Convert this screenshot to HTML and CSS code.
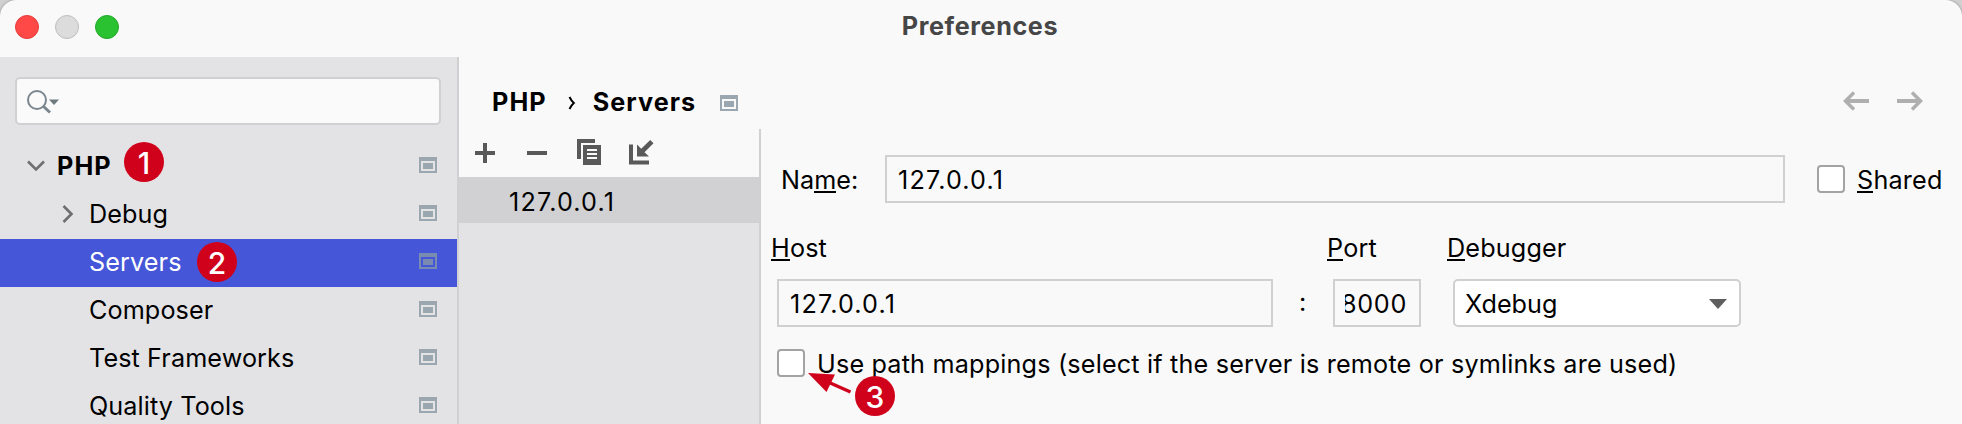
FILE: index.html
```html
<!DOCTYPE html>
<html lang="en">
<head>
<meta charset="utf-8">
<title>Preferences</title>
<link rel="stylesheet" href="styles.css">
</head>
<body>
<svg class="defs" aria-hidden="true">
  <symbol id="project" viewBox="0 0 18 16"><path fill="currentColor" fill-rule="evenodd" d="M0 0h18v16H0zM2 4v10h14V4zM4 6h10v6H4z"/></symbol>
</svg>
<div class="window">
  <header class="titlebar">
    <div class="lights"><i class="light red"></i><i class="light gray"></i><i class="light green"></i></div>
    <h1 class="title">Preferences</h1>
  </header>
  <div class="body">
    <aside class="sidebar">
      <div class="search">
        <svg width="34" height="26" viewBox="0 0 34 26"><g fill="none" stroke="#7b868e"><circle cx="11" cy="11" r="9" stroke-width="2"/><path d="M17 17l7 6.500" stroke-width="3"/></g><path fill="#6e7980" d="M23 10.500h10l-5 5.500z"/></svg>
      </div>
      <ul class="tree">
        <li class="row top"><svg class="chev" width="18" height="12" viewBox="0 0 18 12"><path d="M1 1.500l8 8 8-8"/></svg><span>PHP</span><svg class="mark"><use href="#project"/></svg></li>
        <li class="row"><svg class="chev side" width="12" height="18" viewBox="0 0 12 18"><path d="M1.500 1l8 8-8 8"/></svg><span>Debug</span><svg class="mark"><use href="#project"/></svg></li>
        <li class="row active"><span>Servers</span><svg class="mark"><use href="#project"/></svg></li>
        <li class="row"><span>Composer</span><svg class="mark"><use href="#project"/></svg></li>
        <li class="row"><span>Test Frameworks</span><svg class="mark"><use href="#project"/></svg></li>
        <li class="row"><span>Quality Tools</span><svg class="mark"><use href="#project"/></svg></li>
      </ul>
    </aside>
    <main class="main">
      <div class="crumbs">
        <b>PHP</b>
        <svg class="sep" width="8" height="14" viewBox="0 0 8 14"><path d="M1.500 1Q3.500 5 5.800 7 3.500 9 1.500 13" fill="none" stroke="#000" stroke-width="2"/></svg>
        <b class="current">Servers</b>
        <svg class="mark"><use href="#project"/></svg>
        <svg class="nav" width="80" height="20" viewBox="0 0 80 20"><g fill="none" stroke="#afafaf"><path stroke-width="4" d="M3 10h23M54 10h23"/><path stroke-width="3.500" d="M11 1.500L2.500 10l8.500 8.500M69 1.500l8.500 8.500-8.500 8.500"/></g></svg>
      </div>
      <div class="panes">
        <section class="list">
          <div class="tools">
            <svg width="20" height="20" viewBox="0 0 20 20"><path d="M8 0h4v8h8v4h-8v8H8v-8H0V8h8z"/></svg>
            <svg width="20" height="20" viewBox="0 0 20 20"><path d="M0 8h20v4H0z"/></svg>
            <svg class="copy" width="24" height="26" viewBox="0 0 24 26"><path fill-rule="evenodd" d="M0 0h18v4H4v16H0zM6 6h18v20H6zM10 10v2h10v-2zM10 14v2h10v-2zM10 18v2h10v-2z"/></svg>
            <svg class="import" width="25" height="25" viewBox="0 0 25 25"><path d="M0 4.500h4v16h16v4H0zM8 4.500l4.200 4.200L21.200 0 24.500 3.200 15.500 12.200 20 16.500H8z"/></svg>
          </div>
          <div class="item ip">127.0.0.1</div>
        </section>
        <section class="form">
          <div class="name-row">
            <label class="name-label">Na<u>m</u>e:</label>
            <div class="field name ip">127.0.0.1</div>
            <i class="check"></i>
            <label class="shared"><u>S</u>hared</label>
          </div>
          <div class="grid">
            <label><u>H</u>ost</label><label><u>P</u>ort</label><label><u>D</u>ebugger</label>
          </div>
          <div class="server-row">
            <div class="field host ip">127.0.0.1</div>
            <span class="colon">:</span>
            <div class="field port"><div class="clip">8000</div></div>
            <div class="select"><span>Xdebug</span><svg width="18" height="10" viewBox="0 0 18 10"><path fill="#5e5e5e" d="M0 0h18L9 10z"/></svg></div>
          </div>
          <div class="map-row"><i class="check"></i><label class="map-label">Use path mappings (select if the server is remote or symlinks are used)</label></div>
        </section>
      </div>
    </main>
  </div>
  <span class="badge one">1</span>
  <span class="badge two">2</span>
  <span class="badge three">3</span>
  <svg class="pointer" width="44" height="22" viewBox="0 0 44 22"><path d="M0 0L27 1.500 18.500 19z" fill="#d0021b"/><path d="M20 9l22.500 10" stroke="#d0021b" stroke-width="3.500"/></svg>
</div>
</body>
</html>
```
FILE: styles.css
```css
* { box-sizing: border-box; }
body { margin: 0; background: #cfcfcf; font: 25.2px/46px Inter, "Liberation Sans", sans-serif; color: #000; }
svg { display: block; flex: none; }
i { display: block; flex: none; }
.defs { position: absolute; width: 0; height: 0; }
.window { position: relative; width: 1962px; height: 424px; overflow: hidden; background: #f9f9f9; border-radius: 16px 16px 0 0; box-shadow: 0 0 2px #777; }
.titlebar { height: 57px; display: grid; grid-template-columns: 200px 1fr 200px; }
.lights { display: flex; gap: 16px; padding: 15px 0 0 15px; }
.light { width: 24px; height: 24px; border-radius: 50%; border: 1px solid; }
.red { background: #ff4947; border-color: #e33b3a; }
.gray { background: #dcdcdc; border-color: #bdbdbd; }
.green { background: #2bc232; border-color: #22a62a; }
.title { margin: 0; padding: 3px 2px 0 0; text-align: center; font-size: 25.2px; line-height: 46px; font-weight: 700; letter-spacing: .6px; color: #464646; }
.body { display: flex; height: 367px; }
.sidebar { width: 459px; flex: none; background: #e3e3e5; border-right: 2px solid #d0d0d2; padding-top: 20px; }
.search { width: 426px; height: 48px; margin-left: 15px; background: #fafafa; border: 2px solid #d0d0d2; border-radius: 5px; padding: 10px 0 0 9px; }
.tree { list-style: none; margin: 18px 0 0; padding: 0; }
.row { position: relative; height: 48px; display: flex; padding: 0 20px 0 89px; white-space: nowrap; letter-spacing: .1px; }
.row .mark { margin: 14px 0 0 auto; }
.mark { width: 18px; height: 16px; color: #9aa7b0; }
.top { padding-left: 27px; font-weight: 700; letter-spacing: 1.1px; }
.chev { fill: none; stroke: #6e6e6e; stroke-width: 2.6; margin: 17px 12px 0 0; }
.side { margin: 14px 15px 0 -27px; }
.active { background: #4556d8; color: #fff; }
.active .mark { color: #7a8bb0; }
.main { flex: 1; }
.crumbs { height: 72px; display: flex; padding: 22px 39px 0 33px; letter-spacing: 1.1px; }
.crumbs .sep { margin: 17px 17px 0 21px; }
.crumbs .mark { margin: 16px 0 0; }
.crumbs .current { width: 127px; letter-spacing: 1.05px; }
.crumbs .nav { margin: 12px 0 0 auto; }
.panes { display: flex; height: 295px; }
.list { width: 302px; background: #e3e3e5; border-right: 2px solid #d0d0d2; }
.tools { height: 48px; background: #f9f9f9; display: flex; padding: 14px 0 0 16px; gap: 32px; fill: #595959; }
.copy { margin: -4px 0 0 -2px; }
.import { margin: -3px 0 0 -4px; }
.ip { letter-spacing: 1.15px; }
.item { height: 46px; background: #d1d1d3; padding-left: 50px; line-height: 50px; }
.form { flex: 1; padding-top: 26px; }
.name-row { display: flex; height: 48px; padding-left: 20px; }
.field { border: 2px solid #d0d0d0; height: 48px; line-height: 46px; padding-left: 11px; flex: none; }
.name { width: 900px; }
.name-label { width: 104px; line-height: 50px; }
.check { width: 28px; height: 28px; border: 2px solid #a3a3a3; border-radius: 4px; background: #fff; }
.name-row .check { margin: 10px 12px 0 32px; }
.shared { line-height: 50px; letter-spacing: .2px; }
u { text-decoration: none; border-bottom: 2px solid #000; display: inline-block; line-height: 24px; height: 25px; }
.grid { display: grid; grid-template-columns: 556px 120px 1fr; padding: 22px 0 0 10px; height: 76px; letter-spacing: .15px; }
.server-row { display: flex; padding-left: 16px; }
.host { width: 496px; }
.colon { width: 60px; padding-left: 26px; }
.port { width: 88px; padding: 0 9px 0 10px; }
.clip { overflow: hidden; height: 44px; letter-spacing: .7px; text-indent: -4px; }
.select { width: 288px; height: 48px; margin-left: 32px; border: 2px solid #d0d0d0; border-radius: 5px; background: #fff; padding: 0 12px 0 10px; display: flex; justify-content: space-between; }
.select svg { margin-top: 18px; }
.map-row { display: flex; padding: 22px 0 0 16px; gap: 12px; white-space: nowrap; letter-spacing: .18px; }
.map-label { margin-top: -8px; }
.badge { position: absolute; width: 40px; height: 40px; border-radius: 50%; background: #d0021b; color: #fff; font-size: 30px; font-weight: 500; line-height: 42px; text-align: center; }
.one { left: 124px; top: 142px; }
.two { left: 197px; top: 242px; }
.three { left: 855px; top: 376px; }
.pointer { position: absolute; left: 808px; top: 373px; }
```
